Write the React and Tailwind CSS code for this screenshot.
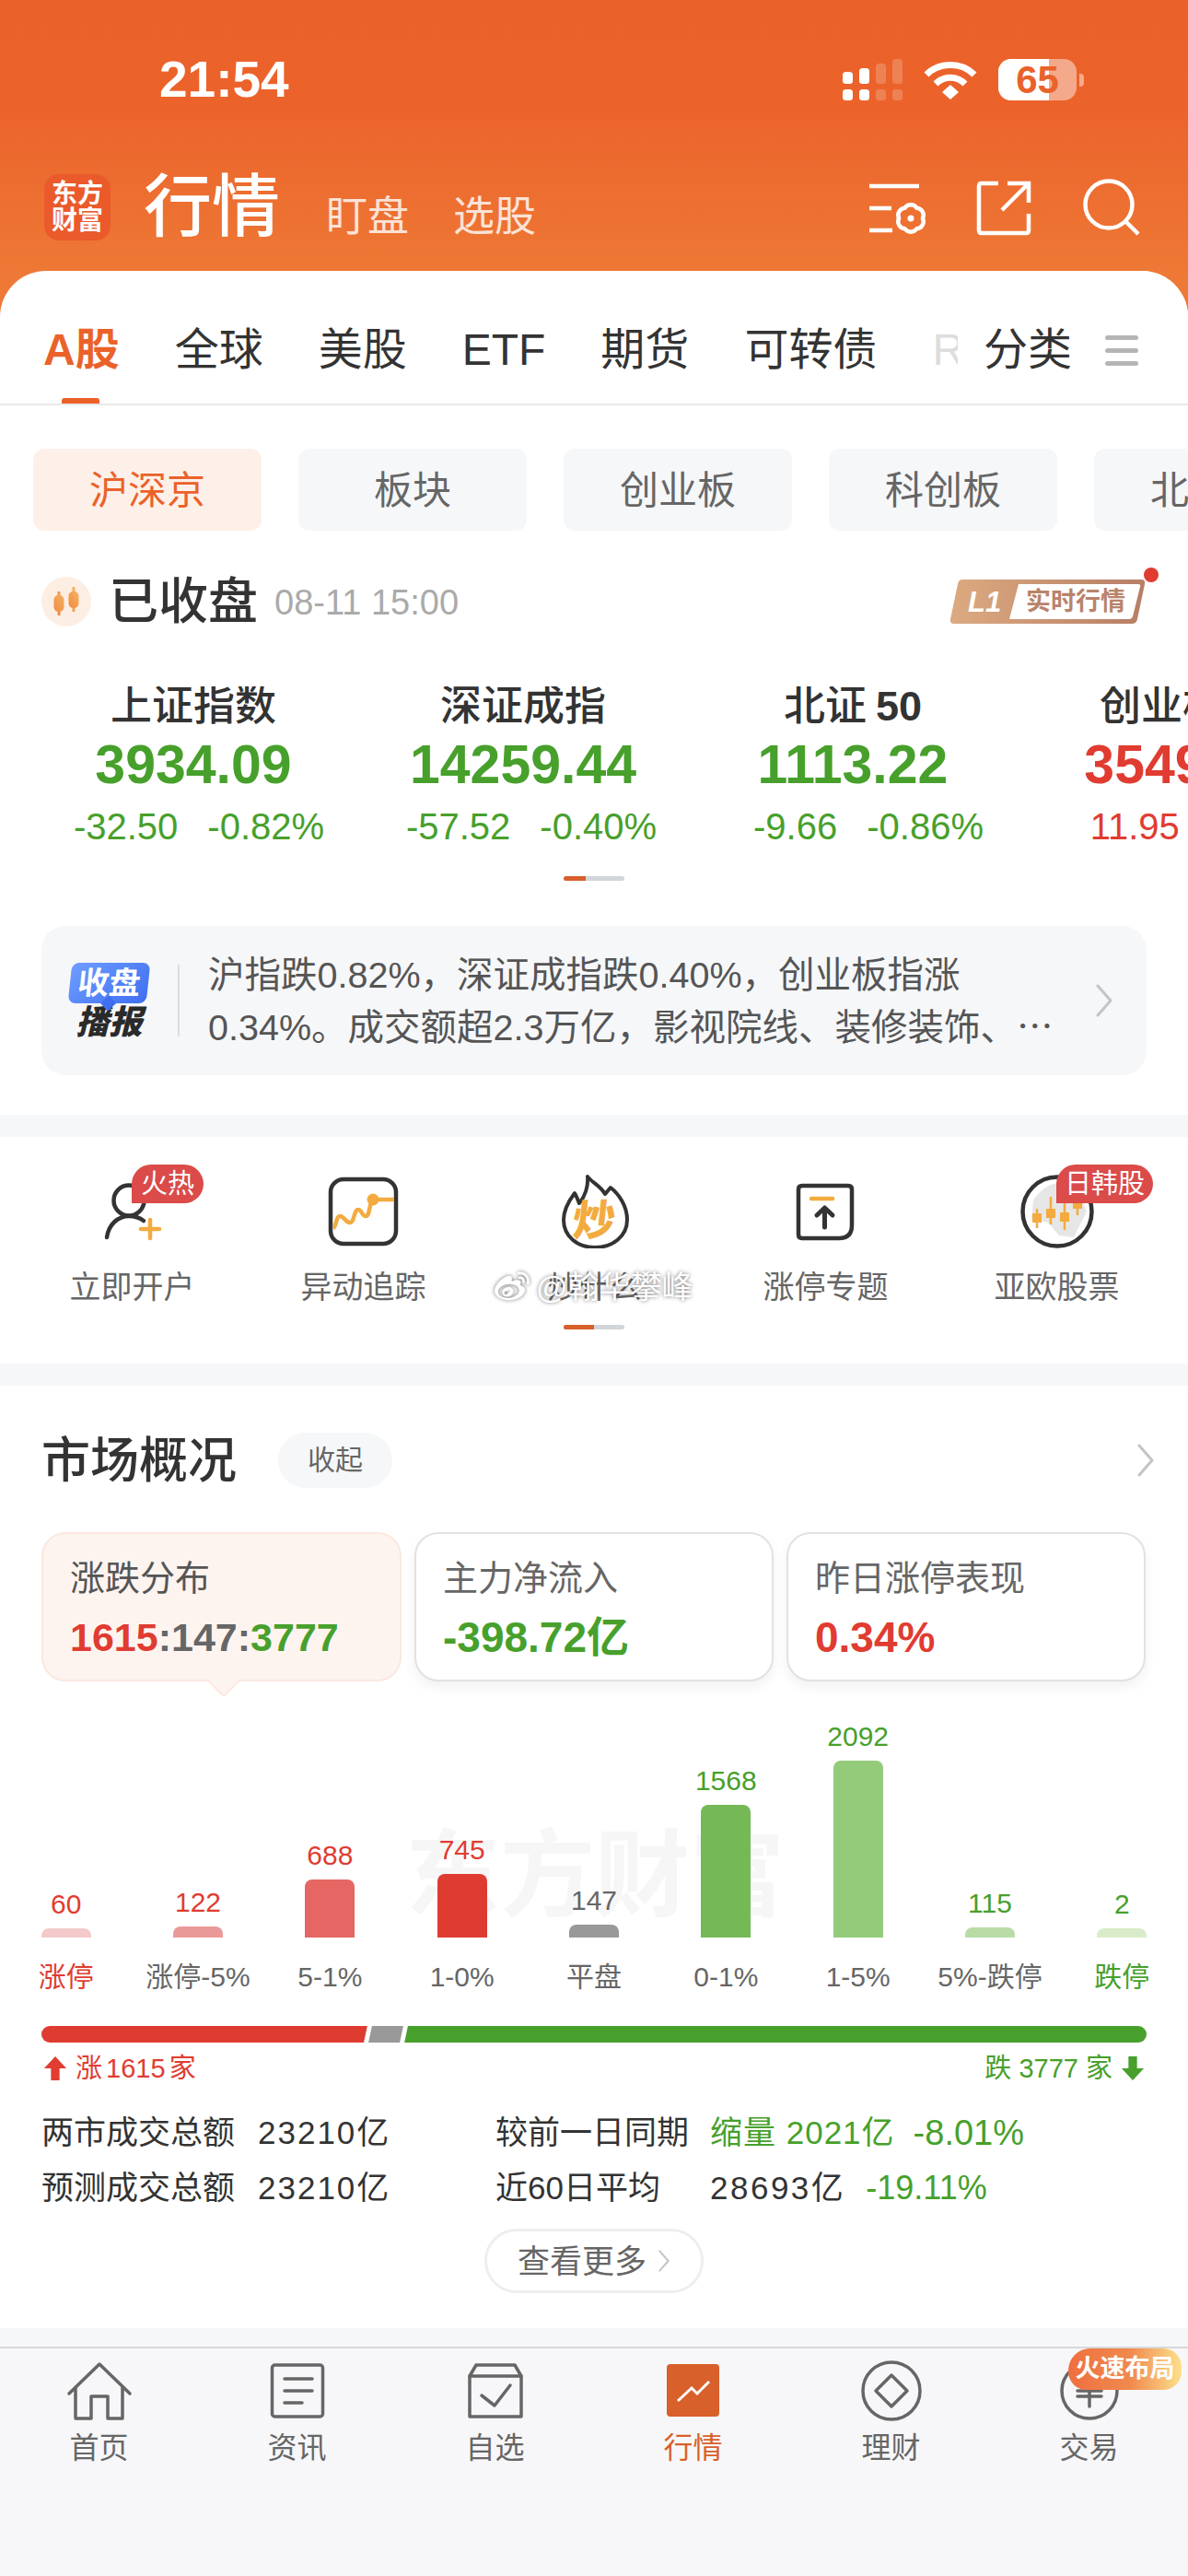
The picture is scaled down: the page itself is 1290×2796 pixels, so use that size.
import { FaWeibo } from 'react-icons/fa'

const tabs = ['全球', '美股', 'ETF', '期货', '可转债']
const chips = ['板块', '创业板', '科创板', '北交所']

const indexes = [
  { name: '上证指数', value: '3934.09', d: '-32.50', p: '-0.82%', up: false, shift: 'ml-[12px]' },
  { name: '深证成指', value: '14259.44', d: '-57.52', p: '-0.40%', up: false, shift: 'ml-[18px]' },
  { name: '北证', tail: '50', value: '1113.22', d: '-9.66', p: '-0.86%', up: false, shift: 'ml-[34px]' },
  { name: '创业板指', value: '3549.04', d: '11.95', p: '0.34%', up: true, shift: 'ml-[42px]' },
]

const bars = [
  { v: '60', label: '涨停', h: 'h-[10px]', bg: 'bg-[#f4c9c9]', vc: 'text-[#e03c31]', lc: 'text-[#e03c31]' },
  { v: '122', label: '涨停-5%', h: 'h-[12px]', bg: 'bg-[#ea9999]', vc: 'text-[#e03c31]', lc: 'text-[#666]' },
  { v: '688', label: '5-1%', h: 'h-[63px]', bg: 'bg-[#e56662]', vc: 'text-[#e03c31]', lc: 'text-[#666]' },
  { v: '745', label: '1-0%', h: 'h-[69px]', bg: 'bg-[#df3c31]', vc: 'text-[#e03c31]', lc: 'text-[#666]' },
  { v: '147', label: '平盘', h: 'h-[14px]', bg: 'bg-[#999]', vc: 'text-[#666]', lc: 'text-[#666]' },
  { v: '1568', label: '0-1%', h: 'h-[144px]', bg: 'bg-[#74b956]', vc: 'text-[#47a02b]', lc: 'text-[#666]' },
  { v: '2092', label: '1-5%', h: 'h-[192px]', bg: 'bg-[#93cb7a]', vc: 'text-[#47a02b]', lc: 'text-[#666]' },
  { v: '115', label: '5%-跌停', h: 'h-[11px]', bg: 'bg-[#b9dca6]', vc: 'text-[#47a02b]', lc: 'text-[#666]' },
  { v: '2', label: '跌停', h: 'h-[10px]', bg: 'bg-[#d8ecc9]', vc: 'text-[#47a02b]', lc: 'text-[#47a02b]' },
]

function Chevron({ className = '', color = '#c4c4c4' }) {
  return (
    <svg viewBox="0 0 20 36" className={className} fill="none">
      <path d="M3 2 L17 18 L3 34" stroke={color} strokeWidth="3" strokeLinecap="round" strokeLinejoin="round" />
    </svg>
  )
}

function StatusBar() {
  return (
    <div className="flex h-[45px] items-center pl-[173px] pr-[113px]">
      <span className="text-[55px] font-bold leading-none text-white">21:54</span>
      <svg viewBox="0 0 65 45" className="ml-auto h-[45px] w-[65px]" fill="#fff">
        <rect x="0" y="14" width="11" height="13" rx="3.5" />
        <rect x="18" y="10" width="11" height="17" rx="3.5" />
        <rect x="36" y="5" width="11" height="22" rx="3.5" fillOpacity="0.2" />
        <rect x="54" y="0" width="11" height="27" rx="3.5" fillOpacity="0.2" />
        <rect x="0" y="33" width="11" height="12" rx="3.5" />
        <rect x="18" y="33" width="11" height="12" rx="3.5" />
        <rect x="36" y="33" width="11" height="12" rx="3.5" fillOpacity="0.2" />
        <rect x="54" y="33" width="11" height="12" rx="3.5" fillOpacity="0.2" />
      </svg>
      <svg viewBox="0 0 58 44" className="ml-[23px] h-[44px] w-[58px]" fill="none" stroke="#fff" strokeWidth="7">
        <path d="M3 16 C17 2 41 2 55 16" />
        <path d="M13 26 C22 17 36 17 45 26" />
        <path d="M20 35 L29 27 L38 35 L29 43 Z" fill="#fff" strokeWidth="0" />
      </svg>
      <div className="relative ml-[23px] h-[45px] w-[85px] overflow-hidden rounded-[14px] bg-white/45">
        <div className="h-full w-[55px] bg-white" />
        <span className="absolute inset-0 flex items-center justify-center text-[42px] font-bold leading-none text-[#ea622a]">
          65
        </span>
      </div>
      <div className="ml-[3px] h-[14px] w-[5px] rounded-r-[4px] bg-white/45" />
    </div>
  )
}

function TitleBar() {
  return (
    <div className="mt-[80px] flex h-[72px] items-end pl-[48px] pr-[52px]">
      <div className="flex h-[72px] w-[72px] flex-col items-center justify-center rounded-[16px] bg-[#ea5a2b] text-[28px] font-bold leading-[29px] text-white">
        <span>东方</span>
        <span>财富</span>
      </div>
      <span className="ml-[36px] text-[74px] font-medium leading-[72px] text-white">行情</span>
      <span className="ml-[50px] text-[45px] leading-[50px] text-white/80">盯盘</span>
      <span className="ml-[48px] text-[45px] leading-[50px] text-white/80">选股</span>
      <svg viewBox="0 0 64 56" className="mb-[6px] ml-auto h-[56px] w-[64px]" fill="none" stroke="#fff" strokeWidth="4.5">
        <path d="M0 3 H54 M0 27 H24 M0 51 H25" />
        <path d="M58 38 A8 8 0 0 1 51.5 49.3 A8 8 0 0 1 38.5 49.3 A8 8 0 0 1 32 38 A8 8 0 0 1 38.5 26.7 A8 8 0 0 1 51.5 26.7 A8 8 0 0 1 58 38 Z" />
        <circle cx="45" cy="38" r="3.5" fill="#fff" strokeWidth="0" />
      </svg>
      <svg viewBox="0 0 60 60" className="mb-[5px] ml-[52px] h-[60px] w-[60px]" fill="none" stroke="#fff" strokeWidth="4.5">
        <path d="M24 3 H6 Q3 3 3 6 V54 Q3 57 6 57 H54 Q57 57 57 54 V36" />
        <path d="M28 32 L57 3 M34 3 H57 V24" />
      </svg>
      <svg viewBox="0 0 62 62" className="mb-[5px] ml-[56px] h-[62px] w-[62px]" fill="none" stroke="#fff" strokeWidth="4.5">
        <circle cx="28" cy="28" r="25.5" />
        <path d="M46 46 L60 60" />
      </svg>
    </div>
  )
}

function Tabs() {
  return (
    <div className="relative box-content flex h-[144px] items-center gap-[60px] overflow-hidden border-b-2 border-[#e9e9e9] pl-[47px] text-[48px] leading-none text-[#333]">
      <div className="relative flex h-full items-center pt-[28px]">
        <span className="font-bold text-[#ea622a]">A股</span>
        <div className="absolute bottom-0 left-[20px] h-[6px] w-[41px] rounded-t-[3px] bg-[#ea622a]" />
      </div>
      {tabs.map((t) => (
        <span key={t} className="whitespace-nowrap pt-[28px]">
          {t}
        </span>
      ))}
      <span className="pt-[28px] text-[#ddd]">REITs</span>
      <div className="absolute bottom-0 left-[1040px] top-0 flex w-[250px] items-center bg-white pl-[28px] pt-[28px]">
        <span>分类</span>
        <div className="ml-[36px] flex w-[36px] flex-col gap-[9px]">
          <div className="h-[5px] rounded-full bg-[#b5b5b5]" />
          <div className="h-[5px] rounded-full bg-[#b5b5b5]" />
          <div className="h-[5px] rounded-full bg-[#b5b5b5]" />
        </div>
      </div>
    </div>
  )
}

function Chips() {
  return (
    <div className="mt-[47px] flex gap-[40px] overflow-hidden pl-[36px] text-[42px] leading-none">
      <div className="flex h-[89px] w-[248px] shrink-0 items-center justify-center rounded-[12px] bg-[#fdf0e9] pt-[2px] text-[#ea622a]">
        沪深京
      </div>
      {chips.map((c) => (
        <div key={c} className="flex h-[89px] w-[248px] shrink-0 items-center justify-center rounded-[12px] bg-[#f6f7f9] pt-[2px] text-[#666]">
          {c}
        </div>
      ))}
    </div>
  )
}

function MarketState() {
  return (
    <div className="mt-[50px] flex h-[54px] items-center pl-[45px] pr-[46px]">
      <svg viewBox="0 0 54 54" className="h-[54px] w-[54px]">
        <defs>
          <linearGradient id="candle" x1="0" y1="1" x2="1" y2="0">
            <stop offset="0" stopColor="#f28a45" />
            <stop offset="1" stopColor="#f4b261" />
          </linearGradient>
        </defs>
        <circle cx="27" cy="27" r="27" fill="#fdeee3" />
        <path d="M19 16 V42 M35 11 V38" stroke="url(#candle)" strokeWidth="3" />
        <rect x="13.5" y="20" width="11" height="18" rx="5" fill="url(#candle)" />
        <rect x="29.5" y="16" width="11" height="18" rx="5" fill="url(#candle)" />
      </svg>
      <span className="ml-[19px] text-[54px] font-medium leading-none text-[#333]">已收盘</span>
      <span className="ml-[18px] mt-[2px] text-[38px] leading-none text-[#aaa]">08-11 15:00</span>
      <div className="relative ml-auto h-[48px] w-[213px]">
        <svg viewBox="0 0 213 48" className="absolute inset-0 h-full w-full">
          <defs>
            <linearGradient id="gold" x1="0" y1="0" x2="1" y2="0">
              <stop offset="0" stopColor="#dcaa80" />
              <stop offset="1" stopColor="#b67e66" />
            </linearGradient>
          </defs>
          <path d="M14 0 H208 Q213 0 212 5 L204 43 Q203 48 198 48 H5 Q0 48 1 43 L9 5 Q10 0 14 0 Z" fill="url(#gold)" />
          <path d="M75 5 H205 Q208 5 207 8 L199 40 Q198 43 195 43 H65 Z" fill="#fff" />
        </svg>
        <span className="absolute left-[20px] top-[6px] text-[31px] font-bold italic leading-[38px] text-white">L1</span>
        <span className="absolute left-[83px] top-[9px] whitespace-nowrap text-[27px] font-bold leading-[30px] text-[#b8836b]">实时行情</span>
        <div className="absolute -right-[14px] -top-[13px] h-[16px] w-[16px] rounded-full bg-[#e03c31]" />
      </div>
    </div>
  )
}

function IndexRow() {
  return (
    <div className="mt-[65px] flex overflow-hidden pl-[31px]">
      {indexes.map((x) => {
        const color = x.up ? 'text-[#e03c31]' : 'text-[#47a02b]'
        return (
          <div key={x.name} className="flex w-[358px] shrink-0 flex-col items-center">
            <span className="whitespace-nowrap text-[45px] font-medium leading-[44px] text-[#333]">
              {x.name}
              {x.tail && <span className="ml-[10px] font-bold">{x.tail}</span>}
            </span>
            <span className={`mt-[12px] text-[59px] font-bold leading-[58px] ${color}`}>{x.value}</span>
            <div className={`mt-[20px] flex gap-[32px] whitespace-nowrap text-[40px] leading-[36px] ${color} ${x.shift}`}>
              <span>{x.d}</span>
              <span>{x.p}</span>
            </div>
          </div>
        )
      })}
    </div>
  )
}

function Pager({ className, fill }) {
  return (
    <div className={`mx-auto h-[5px] w-[66px] overflow-hidden rounded-full bg-[#d2d5d9] ${className}`}>
      <div className={`h-full bg-[#d8602a] ${fill}`} />
    </div>
  )
}

function Broadcast() {
  return (
    <div className="mx-[45px] mt-[49px] flex h-[162px] items-center rounded-[26px] bg-[#f6f7f9] pl-[31px] pr-[36px]">
      <div className="flex w-[85px] shrink-0 flex-col items-center">
        <div className="relative flex h-[44px] w-[85px] -skew-x-6 items-center justify-center rounded-[8px] bg-[linear-gradient(135deg,#6f9dff,#3f6ff0)] text-[34px] font-bold leading-none text-white">
          收盘
          <div className="absolute -bottom-[6px] left-[38px] h-[12px] w-[12px] rotate-45 bg-[#3f6ff0]" />
        </div>
        <span className="mt-[3px] text-[36px] font-black italic leading-[36px] text-[#2a2a2a]">播报</span>
      </div>
      <div className="ml-[32px] h-[78px] w-[2px] shrink-0 bg-[#dcdcdc]" />
      <div className="ml-[31px] flex-1 whitespace-nowrap text-[39.5px] leading-[54px] text-[#555]">
        <div>沪指跌0.82%，深证成指跌0.40%，创业板指涨</div>
        <div>
          0.34%。成交额超2.3万亿，影视院线、装修装饰、<span className="font-['Noto_Sans_CJK_SC']">…</span>
        </div>
      </div>
      <Chevron className="h-[36px] w-[20px] shrink-0" />
    </div>
  )
}

function Badge({ children, className = '' }) {
  return (
    <div className={`absolute top-[-11px] flex h-[42px] items-center justify-center rounded-[21px] rounded-bl-none bg-[#da4b49] text-[29px] leading-none text-white ${className}`}>
      {children}
    </div>
  )
}

const iconStroke = { fill: 'none', stroke: '#333', strokeWidth: 4.5, strokeLinecap: 'round', strokeLinejoin: 'round' }
const orange = '#f3ab3f'

function Shortcuts() {
  return (
    <div className="mt-[24px] h-[246px] bg-white pt-[41px]">
      <div className="flex pl-[18px]">
        <div className="relative flex w-[251px] flex-col items-center">
          <svg viewBox="0 0 80 80" className="h-[80px] w-[80px]" {...iconStroke}>
            <circle cx="36" cy="28" r="16.5" />
            <path d="M12 68 C14 54 24 45 36 45 C42 45 48 47 52 50" />
            <path d="M59 49 V69 M49 59 H69" stroke={orange} />
          </svg>
          <Badge className="left-[125px] w-[78px]">火热</Badge>
          <span className="mt-[26px] text-[34px] leading-[33px] text-[#666]">立即开户</span>
        </div>
        <div className="flex w-[251px] flex-col items-center">
          <svg viewBox="0 0 80 80" className="h-[80px] w-[80px]" {...iconStroke}>
            <rect x="4" y="5" width="71" height="70" rx="14" />
            <path d="M7 58 C10 57 10 45 14 45 C19 45 20 52 25 52 C30 52 29 38 34 38 C38 38 38 45 42 45 C47 45 45 33 50 27 H73" stroke={orange} strokeLinecap="butt" />
            <circle cx="50" cy="27" r="6.5" fill={orange} stroke="none" />
          </svg>
          <span className="mt-[26px] text-[34px] leading-[33px] text-[#666]">异动追踪</span>
        </div>
        <div className="relative flex w-[251px] flex-col items-center">
          <div className="relative h-[80px] w-[80px]">
            <svg viewBox="0 0 80 80" className="h-[80px] w-[80px]" {...iconStroke} strokeWidth="4">
              <path d="M32 2 C36 8 46 12 51 21 C53 19 55 16 57 14 C66 21 75 34 75 49 C75 67 59 79 40 79 C21 79 6 67 6 49 C6 38 12 28 18 20 C20 23 21 27 23 31 C29 24 33 13 32 2 Z" />
            </svg>
            <span className="absolute left-[16px] top-[27px] -skew-x-6 text-[46px] font-black leading-[46px] text-[#f3ab3f]">炒</span>
          </div>
          <span className="mt-[26px] text-[34px] leading-[33px] text-[#666]">炒什么</span>
          <div className="absolute left-[13px] top-[103px] flex items-center whitespace-nowrap text-[34px] leading-none text-white [text-shadow:0_0_4px_rgba(0,0,0,0.55)]">
            <FaWeibo className="h-[38px] w-[46px] drop-shadow-[0_0_2px_rgba(0,0,0,0.55)]" />
            <span className="ml-[3px]">@翰华攀峰</span>
          </div>
        </div>
        <div className="flex w-[251px] flex-col items-center">
          <svg viewBox="0 0 80 80" className="h-[80px] w-[80px]" {...iconStroke}>
            <path d="M14 12 H64 Q68 12 68 16 V55 Q68 69 54 69 H14 Q10 69 10 65 V16 Q10 12 14 12 Z" />
            <path d="M24 26 H47" stroke={orange} />
            <path d="M38.5 57 V37 M30 44 L38.5 36 L47 44" strokeWidth="5" />
          </svg>
          <span className="mt-[26px] text-[34px] leading-[33px] text-[#666]">涨停专题</span>
        </div>
        <div className="relative flex w-[251px] flex-col items-center">
          <svg viewBox="0 0 80 80" className="h-[80px] w-[80px]" {...iconStroke}>
            <path d="M14 28 C24 12 36 10 44 8 L62 14 L72 40 L58 68 L42 66 L30 52 L12 48 Z" fill="#e6e6e6" stroke="none" />
            <circle cx="40" cy="40" r="37.5" />
            <path d="M18 37 V58 M33 24 V54 M48 30 V60 M62 20 V44" stroke={orange} strokeWidth="2.5" strokeLinecap="butt" />
            <rect x="13" y="42" width="10" height="10" fill={orange} stroke="none" />
            <rect x="28" y="37" width="10" height="10" fill={orange} stroke="none" />
            <rect x="43" y="41" width="10" height="10" fill={orange} stroke="none" />
            <rect x="57" y="25" width="10" height="12" fill={orange} stroke="none" />
          </svg>
          <Badge className="left-[125px] w-[105px]">日韩股</Badge>
          <span className="mt-[26px] text-[34px] leading-[33px] text-[#666]">亚欧股票</span>
        </div>
      </div>
      <Pager className="mt-[24px]" fill="w-[33px]" />
    </div>
  )
}

function SummaryCards() {
  return (
    <div className="mt-[48px] flex gap-[14px] px-[45px]">
      <div className="relative h-[162px] w-[391px] rounded-[26px] border-2 border-[#fbe8de] bg-[#fdf4f0] pl-[29px] pt-[28px]">
        <div className="text-[38px] leading-[40px] text-[#555]">涨跌分布</div>
        <div className="mt-[22px] text-[43px] font-bold leading-[44px]">
          <span className="text-[#e03c31]">1615</span>
          <span className="text-[#666]">:147:</span>
          <span className="text-[#47a02b]">3777</span>
        </div>
        <div className="absolute -bottom-[14px] left-[182px] h-[28px] w-[28px] rotate-45 rounded-[4px] border-b-2 border-r-2 border-[#fbe8de] bg-[#fdf4f0]" />
      </div>
      <div className="h-[162px] w-[390px] rounded-[26px] border-2 border-[#e2e2e2] bg-white pl-[29px] pt-[28px] shadow-[0_6px_14px_rgba(0,0,0,0.06)]">
        <div className="text-[38px] leading-[40px] text-[#666]">主力净流入</div>
        <div className="mt-[22px] text-[46px] font-bold leading-[44px] text-[#47a02b]">-398.72亿</div>
      </div>
      <div className="h-[162px] w-[390px] rounded-[26px] border-2 border-[#e2e2e2] bg-white pl-[29px] pt-[28px] shadow-[0_6px_14px_rgba(0,0,0,0.06)]">
        <div className="text-[38px] leading-[40px] text-[#666]">昨日涨停表现</div>
        <div className="mt-[22px] text-[46px] font-bold leading-[44px] text-[#e03c31]">0.34%</div>
      </div>
    </div>
  )
}

function Chart() {
  return (
    <div className="relative mt-[35px]">
      <div className="absolute left-[440px] top-[122px] whitespace-nowrap text-[103px] font-bold leading-[110px] text-[#f6f6f6]">东方财富</div>
      <div className="relative grid grid-cols-9">
        {bars.map((b) => (
          <div key={b.label} className="flex flex-col items-center">
            <div className="flex h-[243px] flex-col items-center justify-end">
              <span className={`mb-[11px] text-[30px] leading-[30px] ${b.vc}`}>{b.v}</span>
              <div className={`w-[54px] rounded-t-[8px] ${b.h} ${b.bg}`} />
            </div>
            <span className={`mt-[28px] whitespace-nowrap text-[30px] leading-[30px] ${b.lc}`}>{b.label}</span>
          </div>
        ))}
      </div>
    </div>
  )
}

function Breadth() {
  return (
    <div className="px-[45px]">
      <div className="mt-[38px] flex h-[18px] overflow-hidden rounded-full">
        <div className="w-[357px] bg-[#df3c31]" />
        <div className="-ml-[5px] w-[44px] shrink-0 -skew-x-12 border-x-[5px] border-white bg-[#999]" />
        <div className="-ml-[5px] flex-1 bg-[#47a02b]" />
      </div>
      <div className="mt-[13px] flex h-[30px] items-center justify-between text-[29px] leading-[30px]">
        <div className="flex items-center text-[#e03c31]">
          <svg viewBox="0 0 28 28" className="ml-[2px] h-[28px] w-[26px]" fill="#e03c31">
            <path d="M14 0 L27 14 H19 V28 H9 V14 H1 Z" />
          </svg>
          <span className="ml-[9px] [word-spacing:-4px]">涨 1615 家</span>
        </div>
        <div className="flex items-center text-[#47a02b]">
          <span className="mr-[9px]">跌 3777 家</span>
          <svg viewBox="0 0 28 28" className="mr-[2px] h-[28px] w-[26px]" fill="#47a02b">
            <path d="M14 28 L27 14 H19 V0 H9 V14 H1 Z" />
          </svg>
        </div>
      </div>
      <div className="mt-[37px] flex h-[36px] items-center whitespace-nowrap text-[35px] leading-[36px] text-[#333]">
        <span className="w-[235px]">两市成交总额</span>
        <span className="w-[258px] tracking-[2px]">23210亿</span>
        <span className="w-[233px]">较前一日同期</span>
        <span className="tracking-[1px] text-[#47a02b]">缩量 2021亿</span>
        <span className="ml-[20px] text-[38px] text-[#47a02b]">-8.01%</span>
      </div>
      <div className="mt-[24px] flex h-[36px] items-center whitespace-nowrap text-[35px] leading-[36px] text-[#333]">
        <span className="w-[235px]">预测成交总额</span>
        <span className="w-[258px] tracking-[2px]">23210亿</span>
        <span className="w-[233px]">近60日平均</span>
        <span className="tracking-[2.5px]">28693亿</span>
        <span className="ml-[22px] text-[36px] text-[#47a02b]">-19.11%</span>
      </div>
      <div className="mx-auto mt-[26px] flex h-[70px] w-[238px] items-center justify-center rounded-full border-[3px] border-[#eee] text-[35px] leading-none text-[#666]">
        <span>查看更多</span>
        <Chevron className="ml-[12px] h-[24px] w-[14px]" />
      </div>
    </div>
  )
}

function Market() {
  return (
    <div className="mt-[24px] h-[1023px] bg-white pt-[51px]">
      <div className="flex h-[60px] items-center pl-[45px] pr-[36px]">
        <span className="text-[53px] font-medium leading-none text-[#333]">市场概况</span>
        <div className="ml-[45px] flex h-[60px] w-[124px] items-center justify-center rounded-full bg-[#f6f7f9] text-[30px] leading-none text-[#666]">收起</div>
        <Chevron className="ml-auto h-[36px] w-[20px]" />
      </div>
      <SummaryCards />
      <Chart />
      <Breadth />
    </div>
  )
}

const navStroke = { fill: 'none', stroke: '#666', strokeWidth: 3.5, strokeLinejoin: 'round', strokeLinecap: 'round' }

function BottomNav() {
  return (
    <div className="relative flex-1 border-t-2 border-[#d8d8da] bg-[#f7f7f9] pt-[13px]">
      <div className="grid grid-cols-6 text-[32px] leading-[32px] text-[#666]">
        <div className="flex flex-col items-center">
          <svg viewBox="0 0 80 66" className="h-[66px] w-[80px]" {...navStroke}>
            <path d="M7 36 L40 4 L73 36" />
            <path d="M14 30 V63 H31 V39 H49 V63 H65 V30" />
          </svg>
          <span className="mt-[13px]">首页</span>
        </div>
        <div className="flex flex-col items-center">
          <svg viewBox="0 0 80 66" className="h-[66px] w-[80px]" {...navStroke}>
            <rect x="12.5" y="5" width="55" height="56" rx="3" />
            <path d="M26 20 H56 M26 33 H56 M26 46 H45" />
          </svg>
          <span className="mt-[13px]">资讯</span>
        </div>
        <div className="flex flex-col items-center">
          <svg viewBox="0 0 80 66" className="h-[66px] w-[80px]" {...navStroke}>
            <path d="M19 5 H61 L68 17 V61 H12 V17 Z" />
            <path d="M12 17 H68" />
            <path d="M25 38 L39 49 L56 27" />
          </svg>
          <span className="mt-[13px]">自选</span>
        </div>
        <div className="flex flex-col items-center text-[#d8602a]">
          <svg viewBox="0 0 80 66" className="h-[66px] w-[80px]">
            <rect x="11" y="4" width="57" height="57" rx="4" fill="#d8602a" />
            <path d="M23 44 L38 30 L44 36 L57 23" fill="none" stroke="#fff" strokeWidth="3" />
          </svg>
          <span className="mt-[13px]">行情</span>
        </div>
        <div className="flex flex-col items-center">
          <svg viewBox="0 0 80 66" className="h-[66px] w-[80px]" {...navStroke}>
            <circle cx="40" cy="33" r="31" />
            <path d="M40 16 L57 33 L40 50 L23 33 Z" />
          </svg>
          <span className="mt-[13px]">理财</span>
        </div>
        <div className="flex flex-col items-center">
          <svg viewBox="0 0 80 66" className="h-[66px] w-[80px]" {...navStroke}>
            <circle cx="40" cy="33" r="30" />
            <path d="M40 20 V50 M27 33 H53 M27 39 H53" />
          </svg>
          <span className="mt-[13px]">交易</span>
        </div>
      </div>
      <div className="absolute left-[1160px] top-0 flex h-[45px] w-[123px] items-center justify-center rounded-b-[20px] rounded-tl-[24px] rounded-tr-[20px] bg-[linear-gradient(90deg,#ef6f3f,#f08a4e_55%,#fde08c)] text-[27px] font-bold leading-none text-white">
        火速布局
      </div>
    </div>
  )
}

export default function App() {
  return (
    <div className="flex h-[2796px] w-[1290px] flex-col overflow-hidden bg-[#f6f7f9] font-['Liberation_Sans','Noto_Sans_CJK_SC',sans-serif]">
      <div className="h-[294px] shrink-0 bg-[linear-gradient(180deg,#ea622a_0%,#eb632b_40%,#ee7835_100%)] pt-[64px]">
        <StatusBar />
        <TitleBar />
      </div>
      <div className="h-[916px] shrink-0 bg-[#ee7835]">
        <div className="h-full overflow-hidden rounded-t-[50px] bg-white">
          <Tabs />
          <Chips />
          <MarketState />
          <IndexRow />
          <Pager className="mt-[36px]" fill="w-[24px]" />
          <Broadcast />
        </div>
      </div>
      <Shortcuts />
      <Market />
      <div className="h-[20px] shrink-0" />
      <BottomNav />
    </div>
  )
}
